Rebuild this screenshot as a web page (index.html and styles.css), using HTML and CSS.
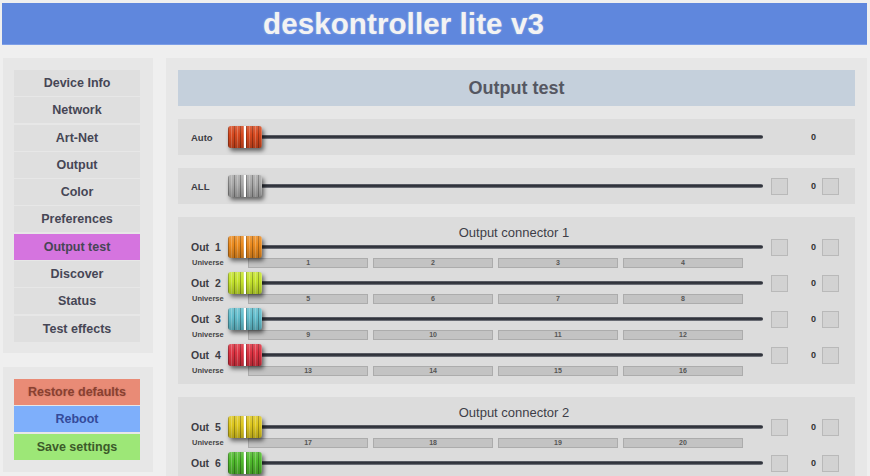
FILE: index.html
```html
<!DOCTYPE html>
<html>
<head>
<meta charset="utf-8">
<title>deskontroller lite v3</title>
<link rel="stylesheet" href="styles.css">
</head>
<body>
<header class="topbar"><h1 class="brand">deskontroller lite v3</h1></header>
<div class="layout">
  <aside class="sidebar">
    <nav class="panel menu">
      <a class="item">Device Info</a>
      <a class="item">Network</a>
      <a class="item">Art-Net</a>
      <a class="item">Output</a>
      <a class="item">Color</a>
      <a class="item">Preferences</a>
      <a class="item active">Output test</a>
      <a class="item">Discover</a>
      <a class="item">Status</a>
      <a class="item">Test effects</a>
    </nav>
    <div class="panel menu actions">
      <a class="item restore">Restore defaults</a>
      <a class="item reboot">Reboot</a>
      <a class="item save">Save settings</a>
    </div>
  </aside>
  <main class="panel content">
    <h2 class="title">Output test</h2>

    <section class="box single">
      <div class="srow">
        <span class="lbl">Auto</span>
        <div class="slider"><span class="knob k-auto"></span></div>
        <span class="cb hidden"></span>
        <span class="val">0</span>
        <span class="cb hidden"></span>
      </div>
    </section>

    <section class="box single">
      <div class="srow">
        <span class="lbl">ALL</span>
        <div class="slider"><span class="knob k-all"></span></div>
        <span class="cb"></span>
        <span class="val">0</span>
        <span class="cb"></span>
      </div>
    </section>

    <section class="box conn">
      <div class="ctitle">Output connector 1</div>
      <div class="srow">
        <span class="lbl out">Out&nbsp;&nbsp;1</span>
        <div class="slider"><span class="knob k-orange"></span></div>
        <span class="cb"></span><span class="val">0</span><span class="cb"></span>
      </div>
      <div class="urow"><span class="ulbl">Universe</span><div class="ubox"><span>1</span><span>2</span><span>3</span><span>4</span></div></div>
      <div class="srow">
        <span class="lbl out">Out&nbsp;&nbsp;2</span>
        <div class="slider"><span class="knob k-lime"></span></div>
        <span class="cb"></span><span class="val">0</span><span class="cb"></span>
      </div>
      <div class="urow"><span class="ulbl">Universe</span><div class="ubox"><span>5</span><span>6</span><span>7</span><span>8</span></div></div>
      <div class="srow">
        <span class="lbl out">Out&nbsp;&nbsp;3</span>
        <div class="slider"><span class="knob k-teal"></span></div>
        <span class="cb"></span><span class="val">0</span><span class="cb"></span>
      </div>
      <div class="urow"><span class="ulbl">Universe</span><div class="ubox"><span>9</span><span>10</span><span>11</span><span>12</span></div></div>
      <div class="srow">
        <span class="lbl out">Out&nbsp;&nbsp;4</span>
        <div class="slider"><span class="knob k-red"></span></div>
        <span class="cb"></span><span class="val">0</span><span class="cb"></span>
      </div>
      <div class="urow"><span class="ulbl">Universe</span><div class="ubox"><span>13</span><span>14</span><span>15</span><span>16</span></div></div>
    </section>

    <section class="box conn">
      <div class="ctitle">Output connector 2</div>
      <div class="srow">
        <span class="lbl out">Out&nbsp;&nbsp;5</span>
        <div class="slider"><span class="knob k-yellow"></span></div>
        <span class="cb"></span><span class="val">0</span><span class="cb"></span>
      </div>
      <div class="urow"><span class="ulbl">Universe</span><div class="ubox"><span>17</span><span>18</span><span>19</span><span>20</span></div></div>
      <div class="srow">
        <span class="lbl out">Out&nbsp;&nbsp;6</span>
        <div class="slider"><span class="knob k-green"></span></div>
        <span class="cb"></span><span class="val">0</span><span class="cb"></span>
      </div>
    </section>
  </main>
</div>
</body>
</html>
```
FILE: styles.css
```css
html, body {
  margin: 0;
  padding: 0;
  height: 100%;
  overflow: hidden;
}
body {
  background: #efefef;
  font-family: "Liberation Sans", Arial, sans-serif;
  color: #444;
}
.topbar {
  margin: 3px 3px 0 2px;
  height: 41px;
  background: #5f87dd;
  border-bottom: 1px solid #7d9ee6;
  display: flex;
  align-items: center;
  justify-content: center;
  padding-right: 62px;
}
.brand {
  margin: 0;
  font-size: 29.5px;
  font-weight: bold;
  color: #f3f3f3;
  letter-spacing: 0.1px;
  text-shadow: 0 0 2px rgba(255,255,255,0.4);
}
.layout {
  display: flex;
  gap: 13px;
  padding: 13px 0 0 3px;
  align-items: flex-start;
}
.sidebar {
  width: 150px;
  flex: none;
  display: flex;
  flex-direction: column;
  gap: 14px;
}
.panel {
  background: #e7e7e7;
}
.menu {
  display: flex;
  flex-direction: column;
  gap: 1.3px;
  padding: 12px 13px 11px 11px;
}
.item {
  display: flex;
  align-items: center;
  justify-content: center;
  height: 26px;
  background: #dfdfdf;
  font-size: 12.5px;
  font-weight: bold;
  color: #464655;
}
.item.active { background: #d574df; }
.actions { padding-bottom: 12px; gap: 1.5px; }
.restore { background: #e98b76; color: #8a4030; text-shadow: 0 0 2px rgba(0,0,0,0.15); }
.reboot { background: #7eaffb; color: #344a9a; }
.save { background: #9de777; color: #3c5a2a; }

.content {
  width: 701px;
  flex: none;
  box-sizing: border-box;
  padding: 12px 12px 0 12px;
  display: flex;
  flex-direction: column;
  gap: 13px;
  height: 500px;
}
.title {
  margin: 0;
  height: 36px;
  background: #c5d0dc;
  display: flex;
  align-items: center;
  justify-content: center;
  font-size: 18px;
  font-weight: bold;
  color: #555762;
}
.box {
  background: #dcdcdc;
  padding: 0 18px 0 13px;
}
.single {
  height: 36px;
  display: flex;
  align-items: center;
}
.single .srow { flex: 1; }
.conn { padding-top: 9px; padding-bottom: 3px; }
.ctitle {
  text-align: center;
  font-size: 13px;
  line-height: 14px;
  margin-bottom: -3px;
  color: #3e3e48;
  position: relative;
  z-index: 1;
}
.srow {
  display: flex;
  align-items: center;
  height: 20px;
}
.lbl {
  width: 37px;
  font-size: 9.5px;
  font-weight: bold;
  color: #3c3c44;
  flex: none;
}
.lbl.out { font-size: 10.5px; }
.slider {
  position: relative;
  width: 537px;
  height: 22px;
  flex: none;
}
.slider::before {
  content: "";
  position: absolute;
  left: 1px;
  right: 2px;
  top: 9px;
  height: 4px;
  border-radius: 2px;
  background: linear-gradient(#6a6d76, #2c2f37 40%, #3a3d46 70%, #8a8d94);
}
.knob {
  position: absolute;
  left: 0;
  top: 0;
  width: 34px;
  height: 22px;
  border-radius: 3px;
  box-shadow: 2px 3px 4px rgba(0,0,0,0.55);
  background:
    linear-gradient(90deg, transparent 46%, #fff 46%, #fff 52%, transparent 52%),
    linear-gradient(rgba(255,255,255,0.15), rgba(0,0,0,0) 40%, rgba(0,0,0,0.2)),
    repeating-linear-gradient(90deg, rgba(0,0,0,0.28) 0 1px, transparent 1px 3px, rgba(255,255,255,0.22) 3px 4px, transparent 4px 6px),
    var(--kc);
}
.k-auto { --kc: #d5481e; }
.k-all { --kc: #a9a9a9; }
.k-orange { --kc: #ea8a1e; }
.k-lime { --kc: #c4e22c; }
.k-teal { --kc: #62bdcc; }
.k-red { --kc: #db3241; }
.k-yellow { --kc: #dcc61e; }
.k-green { --kc: #4fb92c; }

.cb {
  width: 15px;
  height: 15px;
  margin-left: 6px;
  background: #d2d2d2;
  border: 1px solid #b9b9b9;
  flex: none;
}
.cb.hidden { visibility: hidden; }
.val {
  width: 28px;
  text-align: right;
  padding-right: 6px;
  font-size: 9px;
  font-weight: bold;
  color: #333;
  flex: none;
}
.val + .cb { margin-left: 0; }
.urow {
  display: flex;
  height: 16px;
}
.ulbl {
  width: 57px;
  padding-left: 1px;
  box-sizing: border-box;
  font-size: 7.5px;
  font-weight: bold;
  line-height: 12px;
  color: #444;
  flex: none;
}
.ubox {
  display: flex;
  gap: 4.8px;
  width: 495px;
  margin-top: 1px;
  height: 10px;
}
.ubox span {
  flex: 1;
  background: #c3c3c3;
  border: 1px solid #acacac;
  font-size: 7px;
  font-weight: bold;
  line-height: 8px;
  text-align: center;
  color: #555;
}
```
